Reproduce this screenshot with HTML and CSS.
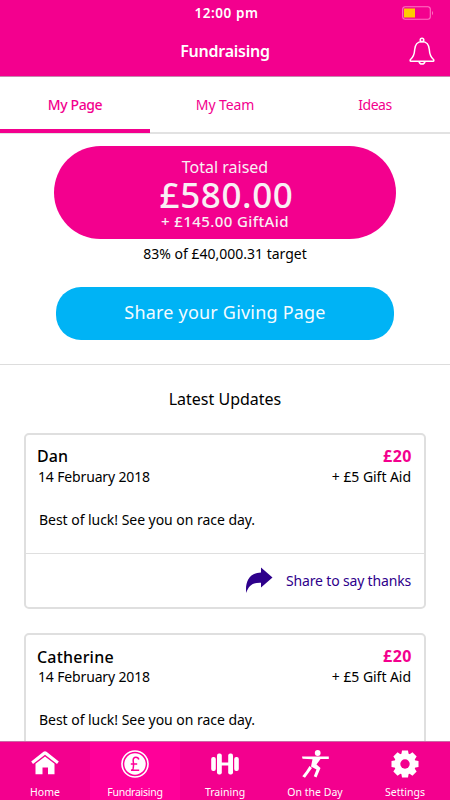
FILE: index.html
```html
<!DOCTYPE html>
<html lang="en">
<head>
<meta charset="utf-8">
<title>Fundraising</title>
<link rel="stylesheet" href="styles.css">
</head>
<body>
<div class="app">
  <header class="header">
    <div class="status">
      <span class="time">12:00 pm</span>
      <svg class="battery" width="33" height="14" viewBox="0 0 33 14"><rect x=".7" y=".7" width="27.6" height="12.6" rx="2.5" fill="none" stroke="#ff73c4" stroke-width="1.1"/><rect x="2" y="2.5" width="11" height="9" fill="#ffcb00"/><path d="M30 4.7q2 2.3 0 4.6z" fill="#ff73c4"/></svg>
    </div>
    <div class="titlebar">
      <h1 class="title">Fundraising</h1>
      <svg class="bell" width="26" height="28" viewBox="0 0 26 28" fill="none" stroke="#fff" stroke-width="1.5" stroke-linejoin="round"><circle cx="13" cy="3" r="1.8"/><path d="M13 4.4C8.5 4.4 6 8 5.7 12.5C5.4 18 4.5 20 1.5 22.5Q.6 24 2 24.3H24Q25.4 24 24.5 22.5C21.5 20 20.6 18 20.3 12.5C20 8 17.5 4.4 13 4.4Z"/><path d="M10 24.5Q10.5 27 13 27T16 24.5"/></svg>
    </div>
  </header>
  <nav class="tabs">
    <a class="tab tab-active">My Page</a>
    <a class="tab">My Team</a>
    <a class="tab tab-ideas">Ideas</a>
  </nav>
  <main class="main">
    <section class="summary">
      <div class="total">
        <div class="total-label">Total raised</div>
        <div class="total-amount">£580.00</div>
        <div class="total-aid">+ £145.00 GiftAid</div>
      </div>
      <p class="target">83% of £40,000.31 target</p>
      <button class="share-page">Share your Giving Page</button>
    </section>
    <section class="updates">
      <h2 class="updates-title">Latest Updates</h2>
      <article class="card">
        <div class="card-body">
          <div class="row names"><span class="name">Dan</span><span class="amount">£20</span></div>
          <div class="row meta"><span class="date">14 February 2018</span><span class="aid">+ £5 Gift Aid</span></div>
          <p class="message">Best of luck! See you on race day.</p>
        </div>
        <div class="card-action">
          <svg width="28" height="27" viewBox="0 0 28 27"><path d="M16 .5L27.500 10.500L16 20.500V15.800C8 15.500 4 18 1.200 26C0 15 4 6 16 5.500Z" fill="#2e008b"/></svg>
          <span class="thanks">Share to say thanks</span>
        </div>
      </article>
      <article class="card card-second">
        <div class="card-body">
          <div class="row names"><span class="name catherine">Catherine</span><span class="amount">£20</span></div>
          <div class="row meta"><span class="date">14 February 2018</span><span class="aid">+ £5 Gift Aid</span></div>
          <p class="message">Best of luck! See you on race day.</p>
        </div>
        <div class="card-action"></div>
      </article>
    </section>
  </main>
  <nav class="bottom">
    <a class="item"><svg width="30" height="30" viewBox="0 0 30 30" fill="#fff"><path d="M13.500 2.800Q15 1.700 16.500 2.800L28.800 12.500L27 15L15 5.800L3 15L1.200 12.500Z"/><path d="M15 7.500L24.500 14.800V25.300H18V18.500H12.500V25.300H5.500V14.800Z"/></svg><span class="l-home">Home</span></a>
    <a class="item item-active"><svg width="30" height="30" viewBox="0 0 30 30"><circle cx="15" cy="15" r="13" fill="none" stroke="#fff" stroke-width="1.600"/><circle cx="15" cy="15" r="10.700" fill="#fff"/><path d="M18.800 10.500Q18.300 8.300 15.900 8.300Q12.900 8.300 13.200 12Q13.900 17 13 20Q12.500 21 11 21.300H19.200M10.800 15H17.200" fill="none" stroke="#ff0099" stroke-width="1.500"/></svg><span class="l-fund">Fundraising</span></a>
    <a class="item"><svg width="30" height="30" viewBox="0 0 30 30" fill="#fff"><rect x="1.200" y="8" width="4.600" height="14" rx="2"/><rect x="7" y="4.500" width="4.800" height="21" rx="2"/><rect x="11" y="13.500" width="8" height="3"/><rect x="18.200" y="4.500" width="4.800" height="21" rx="2"/><rect x="24.200" y="8" width="4.600" height="14" rx="2"/></svg><span class="l-train">Training</span></a>
    <a class="item"><svg width="30" height="30" viewBox="0 0 30 30" fill="#fff"><circle cx="17.700" cy="4" r="2.900"/><path d="M2 7.500H28.800V10H20.500L16.500 15.500L20.500 19L16.500 28.500L13.800 27.200L16.500 20.500L11 17.500L12.500 10.200L2.500 9.800ZM9.500 17L12 19L5 28.800L2.300 27.300L6 22.500Z"/></svg><span class="l-day">On the Day</span></a>
    <a class="item"><svg width="30" height="30" viewBox="0 0 30 30"><g fill="#fff"><circle cx="15" cy="15" r="10.700"/><path d="M12 1.500H18L19 7H11Z"/><path d="M12 1.500H18L19 7H11Z" transform="rotate(45 15 15)"/><path d="M12 1.500H18L19 7H11Z" transform="rotate(90 15 15)"/><path d="M12 1.500H18L19 7H11Z" transform="rotate(135 15 15)"/><path d="M12 1.500H18L19 7H11Z" transform="rotate(180 15 15)"/><path d="M12 1.500H18L19 7H11Z" transform="rotate(225 15 15)"/><path d="M12 1.500H18L19 7H11Z" transform="rotate(270 15 15)"/><path d="M12 1.500H18L19 7H11Z" transform="rotate(315 15 15)"/></g><circle cx="15" cy="15" r="4.700" fill="#f3008e"/></svg><span class="l-set">Settings</span></a>
  </nav>
</div>
</body>
</html>
```
FILE: styles.css
```css
* { box-sizing: border-box; }
body { margin: 0; font-family: "Noto Sans", sans-serif; color: #000; background: #fff; }
h1, h2, p { margin: 0; font-weight: 400; }
.app { width: 450px; height: 800px; display: flex; flex-direction: column; overflow: hidden; }
.header { flex: none; height: 77px; background: #f3008e; color: #fff; border-bottom: 1px solid #c58aae; }
.status, .titlebar { display: grid; grid-template-columns: 1fr auto 1fr; align-items: center; }
.status { height: 26px; }
.time { grid-column: 2; font-size: 13.5px; font-weight: 600; line-height: 26px; letter-spacing: .55px; margin-right: -3px; }
.battery { justify-self: end; margin-right: 15px; }
.titlebar { height: 50px; }
.title { grid-column: 2; font-size: 16px; font-weight: 600; line-height: 48px; letter-spacing: -.25px; }
.bell { justify-self: end; margin-right: 15px; }
.tabs { flex: none; height: 57px; display: grid; grid-template-columns: repeat(3, 1fr); border-bottom: 2px solid #e2e2e2; }
.tab { color: #f3008e; font-size: 14px; line-height: 56px; text-align: center; height: 56px; letter-spacing: -.1px; }
.tab-active { border-bottom: 4px solid #f3008e; font-weight: 500; letter-spacing: -.4px; }
.tab-ideas { letter-spacing: -.5px; }
.main { flex: 1; min-height: 0; overflow: hidden; }
.summary { height: 231px; padding-top: 12px; border-bottom: 1px solid #ddd; display: flex; flex-direction: column; align-items: center; }
.total { width: 342px; height: 93px; border-radius: 47px; background: #f3008e; color: #f9eff4; text-align: center; padding-top: 10px; white-space: nowrap; }
.total-label { font-size: 16px; line-height: 23px; }
.total-amount { font-size: 35px; font-weight: 500; line-height: 31px; letter-spacing: .6px; padding-left: 3px; }
.total-aid { font-size: 15px; font-weight: 500; line-height: 23px; letter-spacing: .4px; }
.target { font-size: 14px; line-height: 20px; margin-top: 5px; }
.share-page { width: 338px; height: 53px; margin-top: 23px; border: 0; border-radius: 25px; background: #00b3f5; color: #f4fbff; font: 18px/50px "Noto Sans", sans-serif; letter-spacing: .2px; padding: 0 0 3px; }
.updates { padding: 0 24px; }
.updates-title { font-size: 16px; line-height: 24px; text-align: center; padding-top: 22px; height: 68px; }
.card { height: 176px; border: 2px solid #dfdfdf; border-radius: 5px; width: 402px; display: flex; flex-direction: column; }
.card-second { margin-top: 24px; }
.card-body { height: 119px; padding: 9px 13px 0 11px; border-bottom: 1px solid #dfdfdf; }
.row { display: flex; justify-content: space-between; white-space: nowrap; }
.names { line-height: 24px; }
.meta { line-height: 18px; font-size: 14px; }
.name { font-size: 16px; font-weight: 500; letter-spacing: .1px; }
.catherine { padding-top: 1px; letter-spacing: .2px; margin-bottom: -1px; }
.date { letter-spacing: -.15px; padding-left: 1px; }
.aid { letter-spacing: -.05px; }
.amount { font-size: 16px; font-weight: 700; letter-spacing: .5px; margin-right: -1px; color: #f3008e; }
.message { font-size: 14px; line-height: 20px; letter-spacing: -.04px; margin-top: 24px; padding-left: 2px; }
.card-action { flex: 1; display: flex; align-items: center; justify-content: flex-end; gap: 13px; padding-right: 13px; color: #2e008b; font-size: 14px; letter-spacing: -.17px; }
.bottom { flex: none; height: 59px; background: #f3008e; display: grid; grid-template-columns: repeat(5, 1fr); border-top: 1px solid #c96aa5; }
.item { display: flex; flex-direction: column; align-items: center; color: #fff; font-size: 10.5px; padding-top: 7px; }
.item span { line-height: 14px; margin-top: 6px; }
.l-fund { letter-spacing: -.25px; }
.item-active { background: #ff0099; }
```
